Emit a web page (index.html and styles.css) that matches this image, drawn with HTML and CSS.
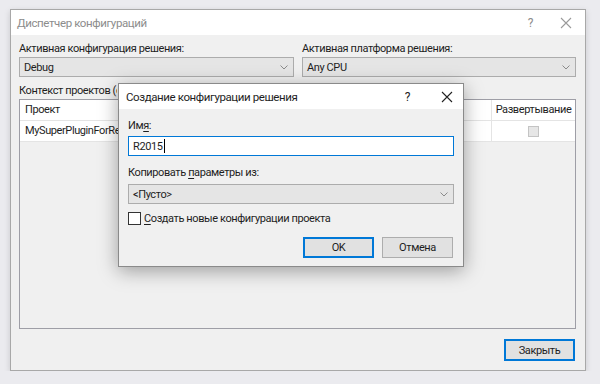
FILE: index.html
```html
<!DOCTYPE html>
<html lang="ru">
<head>
    <meta charset="UTF-8">
    <title>Диспетчер конфигураций</title>
    <link rel="stylesheet" href="styles.css">
</head>
<body>
    <!-- Configuration Manager window -->
    <div class="window">
        <div class="titlebar">
            <span class="title inactive">Диспетчер конфигураций</span>
            <span class="help inactive">?</span>
            <svg class="close" width="12" height="12" viewBox="0 0 12 12"><path d="M1 1L11 11M11 1L1 11" stroke="#9a9a9a" stroke-width="1.1"/></svg>
        </div>
        <div class="content">
            <div class="top-row">
                <div class="field">
                    <label>Активная конфигурация решения:</label>
                    <div class="combo"><span>Debug</span><svg class="arrow" width="8" height="5" viewBox="0 0 8 5"><path d="M0.5 0.5L4 4L7.5 0.5" fill="none" stroke="#8a8a8a"/></svg></div>
                </div>
                <div class="field">
                    <label>Активная платформа решения:</label>
                    <div class="combo"><span>Any CPU</span><svg class="arrow" width="8" height="5" viewBox="0 0 8 5"><path d="M0.5 0.5L4 4L7.5 0.5" fill="none" stroke="#8a8a8a"/></svg></div>
                </div>
            </div>
            <label class="ctx">Контекст проектов (отметьте проекты для построения или развертывания):</label>
            <div class="grid">
                <div class="grid-row head">
                    <div class="cell project">Проект</div>
                    <div class="cell hidden"></div>
                    <div class="cell deploy">Развертывание</div>
                </div>
                <div class="grid-row">
                    <div class="cell project">MySuperPluginForRevit</div>
                    <div class="cell hidden"></div>
                    <div class="cell deploy"><span class="check disabled"></span></div>
                </div>
            </div>
            <div class="footer">
                <button class="btn default">Закрыть</button>
            </div>
        </div>

        <!-- New solution configuration dialog -->
        <div class="dialog">
            <div class="titlebar">
                <span class="title">Создание конфигурации решения</span>
                <span class="help">?</span>
                <svg class="close" width="12" height="12" viewBox="0 0 12 12"><path d="M1 1L11 11M11 1L1 11" stroke="#222" stroke-width="1.1"/></svg>
            </div>
            <div class="content">
                <label>Им<u>я</u>:</label>
                <div class="textbox">R2015<span class="caret"></span></div>
                <label class="gap">Копировать <u>п</u>араметры из:</label>
                <div class="combo"><span>&lt;Пусто&gt;</span><svg class="arrow" width="8" height="5" viewBox="0 0 8 5"><path d="M0.5 0.5L4 4L7.5 0.5" fill="none" stroke="#8a8a8a"/></svg></div>
                <div class="checkrow"><span class="check"></span><span><u>С</u>оздать новые конфигурации проекта</span></div>
                <div class="buttons">
                    <button class="btn default">OK</button>
                    <button class="btn">Отмена</button>
                </div>
            </div>
        </div>
    </div>
</body>
</html>
```

FILE: styles.css
```css
/* General */
body {
    margin: 0;
    padding: 9px 14px 0 10px;
    background: #ebebef;
    font-family: Roboto, "Noto Sans", sans-serif;
    font-size: 11px;
    letter-spacing: -0.4px;
    color: #1e1e1e;
}

label {
    display: block;
    line-height: 15px;
}

u {
    text-decoration: underline;
    text-underline-offset: 2px;
}

/* Windows */
.window {
    position: relative;
    width: 574px;
    height: 360px;
    background: #f0f0f0;
    border: 1px solid #a8a8a8;
    box-shadow: 0 2px 6px rgba(0, 0, 0, 0.15);
    display: flex;
    flex-direction: column;
}

.titlebar {
    height: 25px;
    background: #fff;
    display: flex;
    align-items: center;
    padding: 0 13px 0 6px;
    font-size: 11.5px;
}

.title {
    flex: 1;
}

.inactive {
    color: #8c8c8c;
}

.help {
    margin-right: 27px;
    font-size: 12px;
}

.close {
    display: block;
}

.window > .content {
    flex: 1;
    display: flex;
    flex-direction: column;
    padding: 6px 9px 9px 8px;
}

.top-row {
    display: grid;
    grid-template-columns: 275px 274px;
    gap: 8px;
}

.combo {
    height: 18px;
    margin-top: 1px;
    border: 1px solid #acacac;
    background: #e5e5e5;
    display: flex;
    align-items: center;
    padding: 0 5px 0 4px;
}

.combo span {
    flex: 1;
}

.arrow {
    display: block;
}

.ctx {
    margin-top: 6px;
    width: 98px;
    white-space: nowrap;
    overflow: hidden;
}

/* Project grid */
.grid {
    margin-top: 1px;
    height: 228px;
    border: 1px solid #9e9ea6;
    background: #f0f0f0;
}

.grid-row {
    display: flex;
    height: 20px;
    background: #fff;
    border-bottom: 1px solid #e4e4e4;
}

.cell {
    padding: 0 5px;
    line-height: 20px;
    border-right: 1px solid #e4e4e4;
    white-space: nowrap;
    overflow: hidden;
}

.cell.project {
    width: 88px;
    border-right: none;
    text-overflow: clip;
}

.cell.hidden {
    flex: 1;
}

.cell.deploy {
    width: 81px;
    padding: 0 1px;
    border-right: none;
    display: flex;
    justify-content: center;
    align-items: center;
}

.check {
    display: inline-block;
    width: 11px;
    height: 11px;
    border: 1px solid #333;
    background: #fff;
    box-sizing: border-box;
}

.check.disabled {
    border-color: #c4c4c4;
    background: #e6e6e6;
}

.footer {
    margin-top: auto;
    display: flex;
    justify-content: flex-end;
    padding-right: 1px;
}

.btn {
    width: 71px;
    height: 22px;
    font-family: inherit;
    font-size: 11px;
    letter-spacing: -0.4px;
    color: #1e1e1e;
    background: #e1e1e1;
    border: 1px solid #adadad;
    padding: 0;
}

.btn.default {
    border: 2px solid #0078d7;
}

/* Creation dialog, floats over the manager */
.dialog {
    position: absolute;
    left: 107px;
    top: 73px;
    width: 344px;
    height: 182px;
    background: #f0f0f0;
    border: 1px solid #8a8a8a;
    box-shadow: 0 4px 18px rgba(0, 0, 0, 0.35);
}

.dialog .titlebar {
    padding-right: 10px;
    padding-left: 7px;
}

.dialog .help {
    margin-right: 31px;
}

.dialog .content {
    padding: 9px 9px 0 9px;
}

.textbox {
    height: 18px;
    margin-top: 3px;
    border: 1px solid #0078d7;
    background: #fff;
    display: flex;
    align-items: center;
    padding: 0 4px;
}

.caret {
    display: inline-block;
    width: 1px;
    height: 14px;
    background: #000;
    margin-left: 1px;
}

.gap {
    margin-top: 9px;
}

.dialog .combo {
    margin-top: 4px;
}

.checkrow {
    display: flex;
    align-items: center;
    gap: 3px;
    margin-top: 8px;
}

.checkrow .check {
    width: 13px;
    height: 13px;
}

.buttons {
    display: flex;
    justify-content: flex-end;
    gap: 8px;
    margin-top: 12px;
    padding-right: 1px;
}

.buttons .btn {
    height: 21px;
}
```
